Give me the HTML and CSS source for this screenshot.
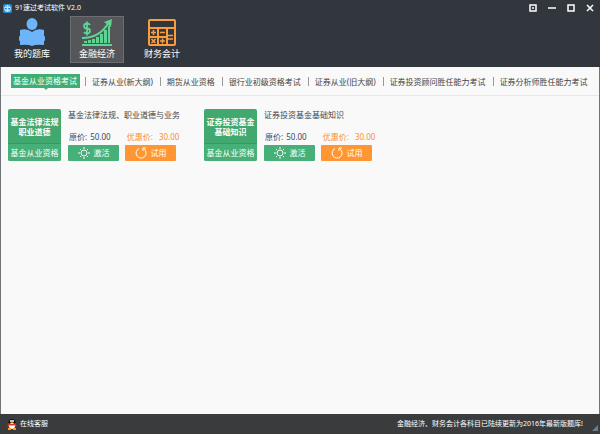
FILE: index.html
```html
<!DOCTYPE html>
<html lang="zh-CN">
<head>
  <meta charset="UTF-8">
  <title>91速过考试软件 V2.0</title>
  <link rel="stylesheet" href="styles.css">
</head>
<body>
  <header class="header">
    <div class="titlebar">
      <svg class="logo" viewBox="0 0 18 18">
        <rect width="18" height="18" rx="3" fill="#2387c8"/>
        <g fill="none" stroke="#d9f1ff" stroke-width="1.5">
          <path d="M9 2v14M3 7h12M3 12h12M5 4l8 11M13 4L5 15"/>
          <circle cx="9" cy="9" r="6"/>
        </g>
      </svg>
      <h1 class="app-name">91速过考试软件 V2.0</h1>
      <div class="window-buttons">
        <button type="button" aria-label="菜单"><svg viewBox="0 0 8 8"><path d="M1 1h6v6H1zM3 4h2"/></svg></button>
        <button type="button" aria-label="最小化"><svg viewBox="0 0 8 8"><path d="M0 4h8"/></svg></button>
        <button type="button" aria-label="最大化"><svg viewBox="0 0 8 8"><path d="M1 1h6v6H1z"/></svg></button>
        <button type="button" aria-label="关闭"><svg viewBox="0 0 8 8"><path d="M1 1l6 6M7 1L1 7"/></svg></button>
      </div>
    </div>

    <nav class="main-nav">
      <a class="nav-item" href="#">
        <svg viewBox="0 0 30 30">
          <g fill="#6cb5fb">
            <ellipse cx="15" cy="6" rx="5.500" ry="6"/>
            <path d="M3 12q7-2 12 2 5-4 12-2v6q1 0 1 1v3q0 1-1 1v4q-8-1-12 1-4-2-12-1v-4q-1 0-1-1v-3q0-1 1-1z"/>
          </g>
        </svg>
        <span>我的题库</span>
      </a>
      <a class="nav-item active" href="#">
        <svg viewBox="0 0 30 30">
          <g fill="#5fd393">
            <path d="M0 26h30v2H0zM2 23h3v2H2zM6 22h3v3H6zM10 21h3v4h-3zM14 19h3v6h-3zM18 16h3v9h-3zM22 12h3v13h-3zM26 8h2v17h-2z"/>
            <path d="M22 4l8-3-1 8z"/>
          </g>
          <path d="M0 20C11 20 21 15 27 4" fill="none" stroke="#5fd393" stroke-width="2"/>
          <path d="M8 7Q7 5.500 5 5.500 2 5.500 2 8t3 2.500T8 13t-3 2.500Q3 15.500 2 14M5 3.500v14" fill="none" stroke="#5fd393" stroke-width="1.800"/>
        </svg>
        <span>金融经济</span>
      </a>
      <a class="nav-item" href="#">
        <svg viewBox="0 0 30 30">
          <rect x="1" y="1" width="28" height="27" rx="2" fill="#fb9d3c"/>
          <path d="M3 3h24v6H3zM3 11h7v7H3zM12 11h7v7h-7zM3 20h7v6H3zM12 20h7v6h-7zM21 11h6v15h-6z" fill="#31373d"/>
          <path d="M4 14.500h5M6.500 12v5M13 14.500h5M4.500 21l4 4M8.500 21l-4 4M13 23h5M15.500 20.500v5M21 17.500h5M21 21h5" fill="none" stroke="#fb9d3c" stroke-width="1.600"/>
        </svg>
        <span>财务会计</span>
      </a>
    </nav>
  </header>

  <main class="content">
    <nav class="tabs">
      <a class="tab active" href="#">基金从业资格考试</a>
      <a class="tab" href="#">证券从业(新大纲)</a>
      <a class="tab" href="#">期货从业资格</a>
      <a class="tab" href="#">银行业初级资格考试</a>
      <a class="tab" href="#">证券从业(旧大纲)</a>
      <a class="tab" href="#">证券投资顾问胜任能力考试</a>
      <a class="tab" href="#">证券分析师胜任能力考试</a>
    </nav>

    <section class="courses">
      <article class="course">
        <div class="cover">
          <div class="cover-title">基金法律法规<br>职业道德</div>
          <div class="cover-type">基金从业资格</div>
        </div>
        <div class="info">
          <h2>基金法律法规、职业道德与业务</h2>
          <div class="prices">
            <span class="price">原价: <b>50.00</b></span>
            <span class="price sale">优惠价: <b>30.00</b></span>
          </div>
          <div class="actions">
            <button class="btn" type="button">
              <svg viewBox="0 0 12 12"><circle cx="6" cy="6" r="3"/><path d="M6 0v2M6 10v2M0 6h2M10 6h2M2 2l1 1M9 9l1 1M10 2L9 3M3 9l-1 1"/></svg>
              激活
            </button>
            <button class="btn btn-try" type="button">
              <svg viewBox="0 0 12 12"><path d="M4 1.500A5 5 0 1 0 9 2M8 4V1h3"/></svg>
              试用
            </button>
          </div>
        </div>
      </article>

      <article class="course">
        <div class="cover">
          <div class="cover-title">证券投资基金<br>基础知识</div>
          <div class="cover-type">基金从业资格</div>
        </div>
        <div class="info">
          <h2>证券投资基金基础知识</h2>
          <div class="prices">
            <span class="price">原价: <b>50.00</b></span>
            <span class="price sale">优惠价: <b>30.00</b></span>
          </div>
          <div class="actions">
            <button class="btn" type="button">
              <svg viewBox="0 0 12 12"><circle cx="6" cy="6" r="3"/><path d="M6 0v2M6 10v2M0 6h2M10 6h2M2 2l1 1M9 9l1 1M10 2L9 3M3 9l-1 1"/></svg>
              激活
            </button>
            <button class="btn btn-try" type="button">
              <svg viewBox="0 0 12 12"><path d="M4 1.500A5 5 0 1 0 9 2M8 4V1h3"/></svg>
              试用
            </button>
          </div>
        </div>
      </article>
    </section>
  </main>

  <footer class="footer">
    <a class="service" href="#">
      <svg viewBox="0 0 10 12">
        <ellipse cx="5" cy="6" rx="4" ry="5" fill="#111"/>
        <ellipse cx="5" cy="8" rx="3" ry="3" fill="#fff"/>
        <circle cx="4" cy="3" r="1" fill="#fff"/>
        <circle cx="6" cy="3" r="1" fill="#fff"/>
        <path d="M3 4h4L5 5z" fill="#f9a11b"/>
        <path d="M1 5q4 2 8 0v2q-4 1-8 0z" fill="#e2322b"/>
        <path d="M0 8l2-2v3zM10 8L8 6v3z" fill="#e2322b"/>
        <path d="M1 10h3v2H1zM6 10h3v2H6z" fill="#f9a11b"/>
      </svg>
      在线客服
    </a>
    <p class="notice">金融经济、财务会计各科目已陆续更新为2016年最新版题库!</p>
    <svg class="grip" viewBox="0 0 6 6"><path d="M6 0v6H0z"/></svg>
  </footer>
</body>
</html>
```
FILE: styles.css
```css
* {
  box-sizing: border-box;
}

body {
  display: flex;
  flex-direction: column;
  min-height: 100vh;
  margin: 0;
  font-family: 'Noto Sans', 'Noto Sans CJK SC', sans-serif;
  font-size: 8px;
  line-height: 12px;
  color: #444;
  background: #f9f9f9;
}

h1, h2, p {
  margin: 0;
  font-size: 8px;
  font-weight: normal;
}

a {
  color: inherit;
  text-decoration: none;
}

button {
  padding: 0;
  border: none;
  font: inherit;
  cursor: pointer;
}

/* header */
.header {
  height: 67px;
  background: #31373d;
  color: #fff;
}

.titlebar {
  display: flex;
  align-items: center;
  height: 16px;
  padding: 0 6px 0 3px;
}

.logo {
  width: 9px;
  height: 9px;
  margin-right: 3px;
}

.app-name {
  font-size: 7px;
}

.window-buttons {
  display: flex;
  gap: 11px;
  margin-left: auto;
}

.window-buttons button {
  width: 8px;
  height: 8px;
  background: none;
}

.window-buttons svg {
  display: block;
  fill: none;
  stroke: #fff;
  stroke-width: 1.5;
}

.main-nav {
  display: flex;
  gap: 11px;
  padding-left: 5px;
}

.nav-item {
  display: flex;
  flex-direction: column;
  align-items: center;
  width: 54px;
  height: 47px;
  padding-top: 1px;
  border: 1px solid transparent;
  font-size: 9px;
}

.nav-item.active {
  background: #54565a;
  border-color: #6c6e71;
}

.nav-item svg {
  width: 30px;
  height: 30px;
}

/* category tabs */
.content {
  flex: 1;
  border: 1px solid #6f7478;
  border-width: 0 1px;
}

.tabs {
  display: flex;
  align-items: center;
  height: 29px;
  padding-left: 10px;
  border-bottom: 1px solid #e8e8e8;
  white-space: nowrap;
}

.tab {
  padding: 0 7px 0 6px;
  border-left: 1px solid #999;
  line-height: 9px;
}

.tab.active {
  position: relative;
  margin-right: 5px;
  padding: 0 3px 0 2px;
  border: none;
  line-height: 14px;
  background: #3fae74;
  color: #fff;
}

.tab.active::after {
  content: '';
  position: absolute;
  top: 100%;
  left: 50%;
  margin-left: -2px;
  border: 2px solid transparent;
  border-top-color: #3fae74;
}

/* course cards */
.courses {
  display: grid;
  grid-template-columns: repeat(auto-fill, 184px);
  gap: 12px;
  padding: 13px 7px;
}

.course {
  display: flex;
  gap: 7px;
}

.cover {
  display: flex;
  flex-direction: column;
  width: 53px;
  height: 52px;
  border-radius: 2px;
  background: #41a86f;
  color: #fff;
  text-align: center;
  white-space: nowrap;
  overflow: hidden;
}

.cover-title {
  flex: 1;
  padding-top: 8px;
  font-weight: bold;
  line-height: 10px;
}

.cover-type {
  border-top: 1px solid #389863;
  background: #46b078;
  line-height: 17px;
}

.info {
  display: flex;
  flex-direction: column;
  white-space: nowrap;
}

.prices {
  display: flex;
  gap: 16px;
  margin-top: auto;
  padding-left: 1px;
  line-height: 16px;
}

.price {
  color: #34496b;
}

.price b {
  margin-left: 1px;
  font-weight: normal;
}

.sale {
  color: #fb8f2c;
}

.sale b {
  margin-left: 4px;
}

.actions {
  display: flex;
  gap: 6px;
}

.btn {
  display: flex;
  align-items: center;
  justify-content: center;
  gap: 4px;
  width: 51px;
  height: 16px;
  border-radius: 1px;
  background: #46b078;
  color: #fff;
}

.btn-try {
  background: #ff9632;
}

.btn svg {
  width: 12px;
  height: 12px;
  fill: none;
  stroke: #fff;
}

/* footer */
.footer {
  display: flex;
  align-items: center;
  height: 20px;
  padding: 0 2px 0 7px;
  background: #393b3c;
  color: #fff;
}

.service {
  display: flex;
  align-items: center;
  gap: 3px;
  font-size: 7px;
}

.service svg {
  width: 10px;
  height: 12px;
}

.notice {
  margin-left: auto;
  font-size: 7px;
}

.grip {
  align-self: flex-end;
  width: 6px;
  height: 6px;
  margin: 0 0 3px 9px;
  fill: #6c7d8c;
}
```
